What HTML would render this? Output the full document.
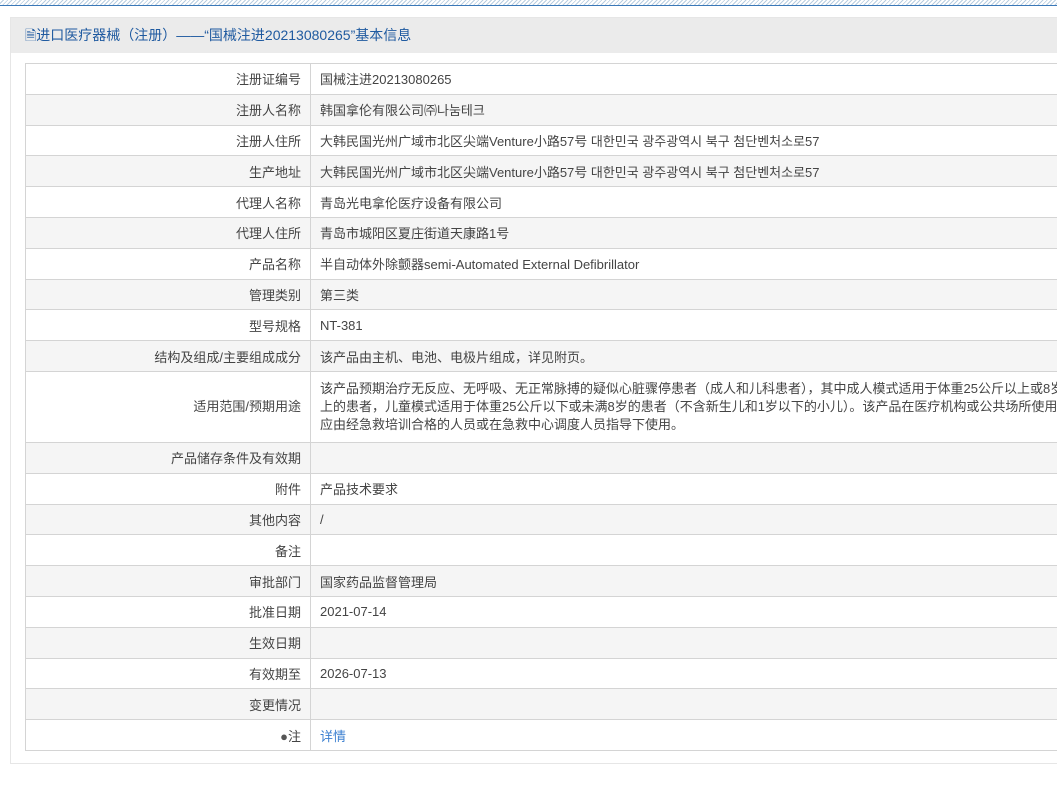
<!DOCTYPE html>
<html><head><meta charset="utf-8"><style>
html,body{margin:0;padding:0;width:1057px;height:788px;overflow:hidden;background:#fff;font-family:"Liberation Sans","Noto Sans CJK SC",sans-serif;font-size:13px;color:#444}
.top{position:absolute;left:0;top:0;width:1057px;height:5px;background:repeating-linear-gradient(135deg,#fff 0 2px,#b8cde0 2px 3px);border-bottom:1px solid #3a78b8}
.panel{position:absolute;left:10px;top:17px;width:1100px;height:747px;border:1px solid #e6e6e6;box-sizing:border-box}
.hd{height:35px;background:#ebebeb;color:#1f5aa0;font-size:14px;line-height:35px;padding-left:14px}
table{position:absolute;left:14px;top:45px;width:1100px;border-collapse:collapse}
td{border:1px solid #d4d4d4;height:29.8px;padding:0 9px;white-space:nowrap;vertical-align:middle}
td.l{width:266px;text-align:right}
tr:nth-child(even) td{background:#f5f5f5}
.tall td{height:70px;line-height:18px}
a{color:#3b7fd0;text-decoration:none}
</style></head><body>
<div class="top"></div>
<div class="panel"><div class="hd">🗎进口医疗器械（注册）——“国械注进20213080265”基本信息</div>
<table>
<tr><td class="l">注册证编号</td><td>国械注进20213080265</td></tr>
<tr><td class="l">注册人名称</td><td>韩国拿伦有限公司㈜나눔테크</td></tr>
<tr><td class="l">注册人住所</td><td>大韩民国光州广域市北区尖端Venture小路57号 대한민국 광주광역시 북구 첨단벤처소로57</td></tr>
<tr><td class="l">生产地址</td><td>大韩民国光州广域市北区尖端Venture小路57号 대한민국 광주광역시 북구 첨단벤처소로57</td></tr>
<tr><td class="l">代理人名称</td><td>青岛光电拿伦医疗设备有限公司</td></tr>
<tr><td class="l">代理人住所</td><td>青岛市城阳区夏庄街道天康路1号</td></tr>
<tr><td class="l">产品名称</td><td>半自动体外除颤器semi-Automated External Defibrillator</td></tr>
<tr><td class="l">管理类别</td><td>第三类</td></tr>
<tr><td class="l">型号规格</td><td>NT-381</td></tr>
<tr><td class="l">结构及组成/主要组成成分</td><td>该产品由主机、电池、电极片组成，详见附页。</td></tr>
<tr class="tall"><td class="l">适用范围/预期用途</td><td>该产品预期治疗无反应、无呼吸、无正常脉搏的疑似心脏骤停患者（成人和儿科患者），其中成人模式适用于体重25公斤以上或8岁以<br>上的患者，儿童模式适用于体重25公斤以下或未满8岁的患者（不含新生儿和1岁以下的小儿）。该产品在医疗机构或公共场所使用，<br>应由经急救培训合格的人员或在急救中心调度人员指导下使用。</td></tr>
<tr><td class="l">产品储存条件及有效期</td><td></td></tr>
<tr><td class="l">附件</td><td>产品技术要求</td></tr>
<tr><td class="l">其他内容</td><td>/</td></tr>
<tr><td class="l">备注</td><td></td></tr>
<tr><td class="l">审批部门</td><td>国家药品监督管理局</td></tr>
<tr><td class="l">批准日期</td><td>2021-07-14</td></tr>
<tr><td class="l">生效日期</td><td></td></tr>
<tr><td class="l">有效期至</td><td>2026-07-13</td></tr>
<tr><td class="l">变更情况</td><td></td></tr>
<tr><td class="l"><span style="color:#555">●</span>注</td><td><a>详情</a></td></tr>
</table></div>
</body></html>
